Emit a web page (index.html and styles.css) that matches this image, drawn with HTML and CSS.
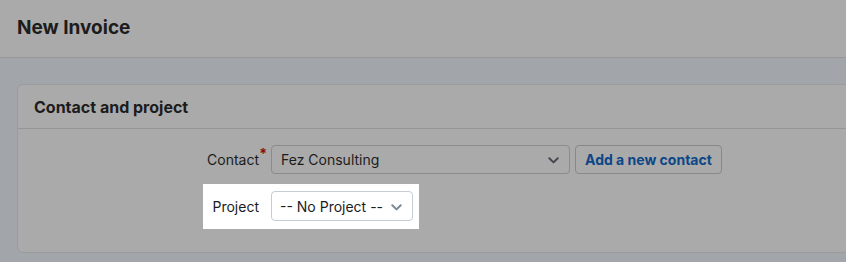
FILE: index.html
```html
<!DOCTYPE html>
<html lang="en">
  <head>
    <meta charset="UTF-8" />
    <meta name="viewport" content="width=device-width, initial-scale=1.0" />
    <title>New Invoice</title>
    <link rel="stylesheet" href="styles.css">
  </head>
  <body>
    <div class="page-header">
      <h1>New Invoice</h1>
    </div>

    <div class="main">
      <div class="card">
        <div class="card-header">
          <h2>Contact and project</h2>
        </div>
        <div class="card-body">
          <div class="field">
            <label class="field-label">Contact<span class="required">*</span></label>
            <div class="select wide">
              <span>Fez Consulting</span>
              <svg class="chevron" width="11" height="7" viewBox="0 0 11 7"><path d="M1.3 1.3 5.5 5.4l4.2-4.1" fill="none" stroke="currentColor" stroke-width="2" stroke-linecap="round" stroke-linejoin="round"/></svg>
            </div>
            <button class="btn">Add a new contact</button>
          </div>

          <div class="field highlight">
            <label class="field-label">Project</label>
            <div class="select narrow">
              <span>-- No Project --</span>
              <svg class="chevron" width="11" height="7" viewBox="0 0 11 7"><path d="M1.3 1.3 5.5 5.4l4.2-4.1" fill="none" stroke="currentColor" stroke-width="2" stroke-linecap="round" stroke-linejoin="round"/></svg>
            </div>
          </div>
        </div>
      </div>
    </div>
  </body>
</html>
```

FILE: styles.css
```css
body {
  font-family: "Inter", "Liberation Sans", sans-serif;
  margin: 0;
  background-color: #a2a5aa;
  color: #1c1c1c;
  overflow: hidden;
}
.page-header {
  background-color: #aaaaaa;
  border-bottom: 1px solid #979899;
  height: 57px;
  display: flex;
  align-items: center;
  padding-left: 17px;
}
.page-header h1 {
  margin: 0;
  font-size: 19px;
  font-weight: 700;
  margin-top: -2px;
}
.main {
  padding: 26px 0 9px 17px;
}
.card {
  background-color: #aaaaaa;
  border: 1px solid #9a9b9d;
  border-radius: 6px;
  margin-right: -20px;
}
.card-header {
  height: 43px;
  border-bottom: 1px solid #949597;
  display: flex;
  align-items: center;
  padding-left: 16px;
}
.card-header h2 {
  margin: 0;
  font-size: 16px;
  font-weight: 700;
}
.card-body {
  padding: 16px 0 23px 185px;
}
.field {
  display: flex;
  align-items: center;
  gap: 12px;
  padding: 0 6px 0 9px;
  width: max-content;
}
.field + .field {
  margin-top: 10px;
}
.field-label {
  width: 47px;
  text-align: right;
  font-size: 14px;
  position: relative;
  white-space: nowrap;
  direction: rtl;
}
.required {
  position: absolute;
  right: -8px;
  top: -6px;
  color: #8b0d0d;
  font-weight: 700;
  font-size: 14px;
}
.select {
  height: 28px;
  border: 1px solid #8a8b8d;
  border-radius: 4px;
  display: flex;
  align-items: center;
  justify-content: space-between;
  padding: 0 10px 0 9px;
  font-size: 14px;
  box-sizing: border-box;
}
.select.wide {
  width: 299px;
  height: 29px;
}
.select.narrow {
  width: 142px;
  height: 30px;
  padding-left: 8px;
}
.chevron {
  color: #44494f;
  margin-top: 2px;
}
.btn {
  margin-left: -7px;
  height: 29px;
  padding: 0 9px;
  background-color: #aaaaaa;
  border: 1px solid #87888a;
  border-radius: 4px;
  font-family: inherit;
  font-size: 14px;
  font-weight: 700;
  color: #0c4787;
}
.highlight {
  background-color: #ffffff;
  padding-top: 7px;
  padding-bottom: 8px;
}
.highlight .select {
  border-color: #c5ccd4;
}
.highlight .chevron {
  color: #7a8794;
}
```
